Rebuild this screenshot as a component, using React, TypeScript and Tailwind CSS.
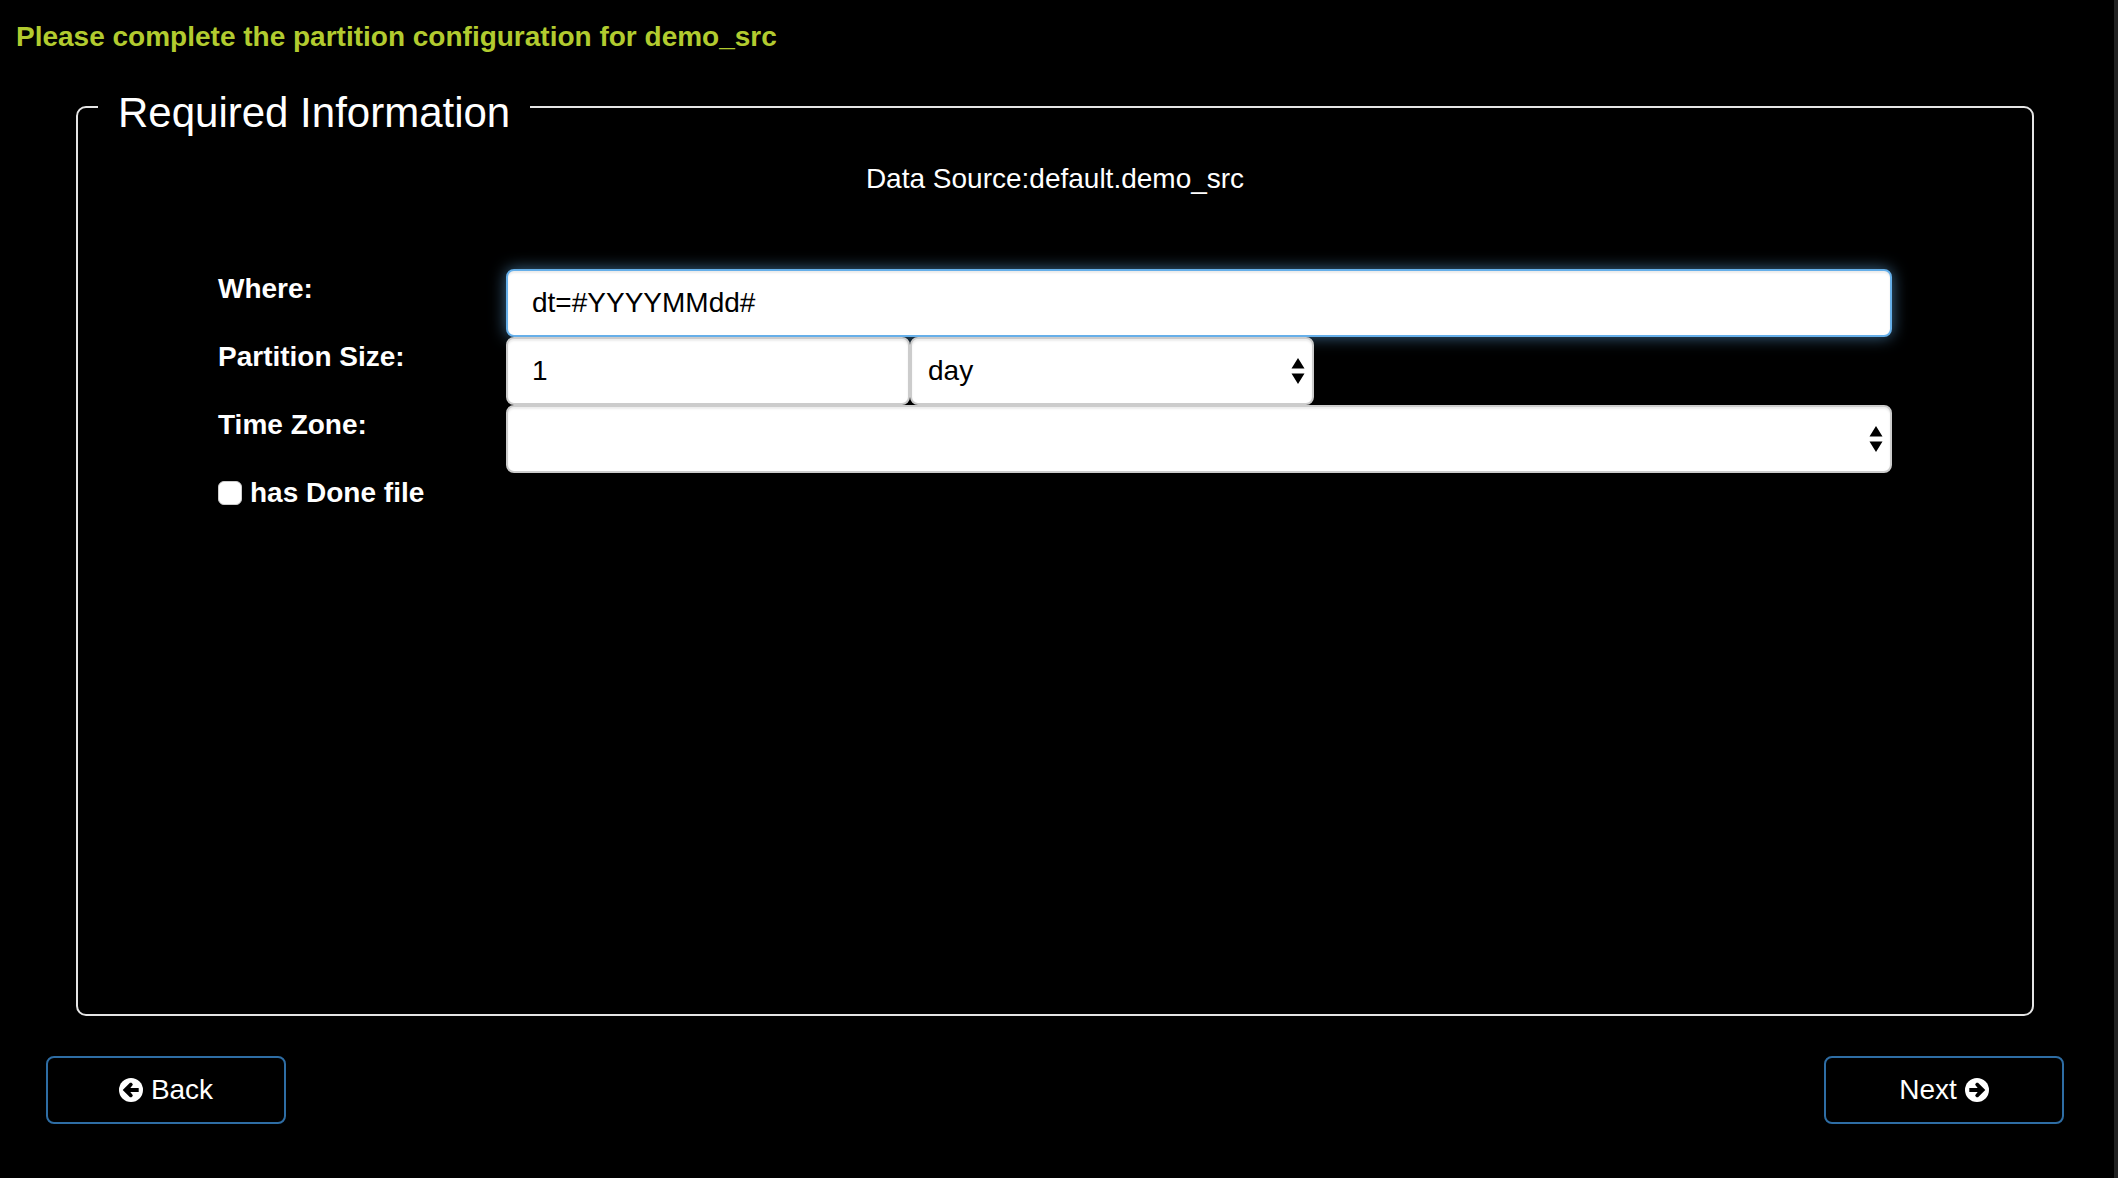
import { useState } from "react";

function Arrows() {
  return (
    <svg
      viewBox="0 0 14 26"
      className="pointer-events-none absolute top-1/2 right-[9px] h-[26px] w-[14px] -translate-y-1/2"
      fill="#000"
      aria-hidden="true"
    >
      <path d="M7 0l6.500 10.500H.5zM7 26l6.500-10.500H.5z" />
    </svg>
  );
}

function CircleArrow({ flip = false }: { flip?: boolean }) {
  return (
    <svg viewBox="0 0 24 24" className={flip ? "size-6 rotate-180" : "size-6"} aria-hidden="true">
      <circle cx="12" cy="12" r="12" fill="#fff" />
      <path d="M3.700 12L11 4.700h1.500L13.700 6v1L11.300 10H19.700v4H11.300l2.400 3v1l-1.200 1.300H11z" fill="#000" />
    </svg>
  );
}

const control =
  "block h-[68px] w-full min-w-0 rounded-lg border-2 bg-white text-[28px] text-black outline-none";
const plain = "border-[#ccc] shadow-[inset_0_2px_2px_rgba(0,0,0,0.075)]";
const label = "block w-[288px] shrink-0 font-bold";
const button =
  "flex h-[68px] w-[240px] items-center justify-center gap-2 rounded-lg border-2 border-[#2e6da4] bg-black";

export default function App() {
  const [where, setWhere] = useState("dt=#YYYYMMdd#");
  const [size, setSize] = useState("1");
  const [unit, setUnit] = useState("day");
  const [zone, setZone] = useState("");

  return (
    <div className="min-h-screen border-r-4 border-[#222] bg-black font-['Liberation_Sans',Arial,sans-serif] text-[28px] leading-[40px] text-white">
      <h1 className="px-4 pt-[17px] font-bold text-[#b2cb2f]">
        Please complete the partition configuration for demo_src
      </h1>
      <form className="pr-[50px] pl-[46px]" onSubmit={(e) => e.preventDefault()}>
        <fieldset className="mx-[30px] mt-[14px] h-[945px] rounded-[10px] border-2 border-[#e5e5e5] px-5">
          <legend className="px-5 pt-3 text-[42px] leading-[60px]">Required Information</legend>
          <p className="mt-4 text-center">Data Source:default.demo_src</p>
          <div className="mx-[120px] mt-[70px]">
            <div className="relative flex">
              <label htmlFor="where" className={label}>Where:</label>
              <input
                id="where"
                value={where}
                onChange={(e) => setWhere(e.target.value)}
                className={`${control} border-[#66afe9] px-6 shadow-[inset_0_2px_2px_rgba(0,0,0,0.075),0_0_16px_rgba(102,175,233,0.6)]`}
              />
            </div>
            <div className="relative flex">
              <label htmlFor="size" className={label}>Partition Size:</label>
              <div className="grid w-[808px] grid-cols-2">
                <input
                  id="size"
                  value={size}
                  onChange={(e) => setSize(e.target.value)}
                  className={`${control} ${plain} px-6`}
                />
                <div className="relative">
                  <select
                    aria-label="Partition unit"
                    value={unit}
                    onChange={(e) => setUnit(e.target.value)}
                    className={`${control} ${plain} appearance-none px-4`}
                  >
                    <option value="hour">hour</option>
                    <option value="day">day</option>
                    <option value="month">month</option>
                  </select>
                  <Arrows />
                </div>
              </div>
            </div>
            <div className="flex">
              <label htmlFor="zone" className={label}>Time Zone:</label>
              <div className="relative w-full">
                <select
                  id="zone"
                  value={zone}
                  onChange={(e) => setZone(e.target.value)}
                  className={`${control} ${plain} appearance-none px-4`}
                >
                  <option value=""></option>
                  <option value="UTC">UTC</option>
                </select>
                <Arrows />
              </div>
            </div>
            <label className="flex w-fit items-center gap-2 font-bold">
              <input
                type="checkbox"
                className="size-6 appearance-none rounded-md border border-[#ccc] bg-white checked:bg-[#66afe9]"
              />
              has Done file
            </label>
          </div>
        </fieldset>
        <div className="mt-10 flex justify-between">
          <button type="button" className={button}>
            <CircleArrow />
            Back
          </button>
          <button type="submit" className={button}>
            Next
            <CircleArrow flip />
          </button>
        </div>
      </form>
    </div>
  );
}
